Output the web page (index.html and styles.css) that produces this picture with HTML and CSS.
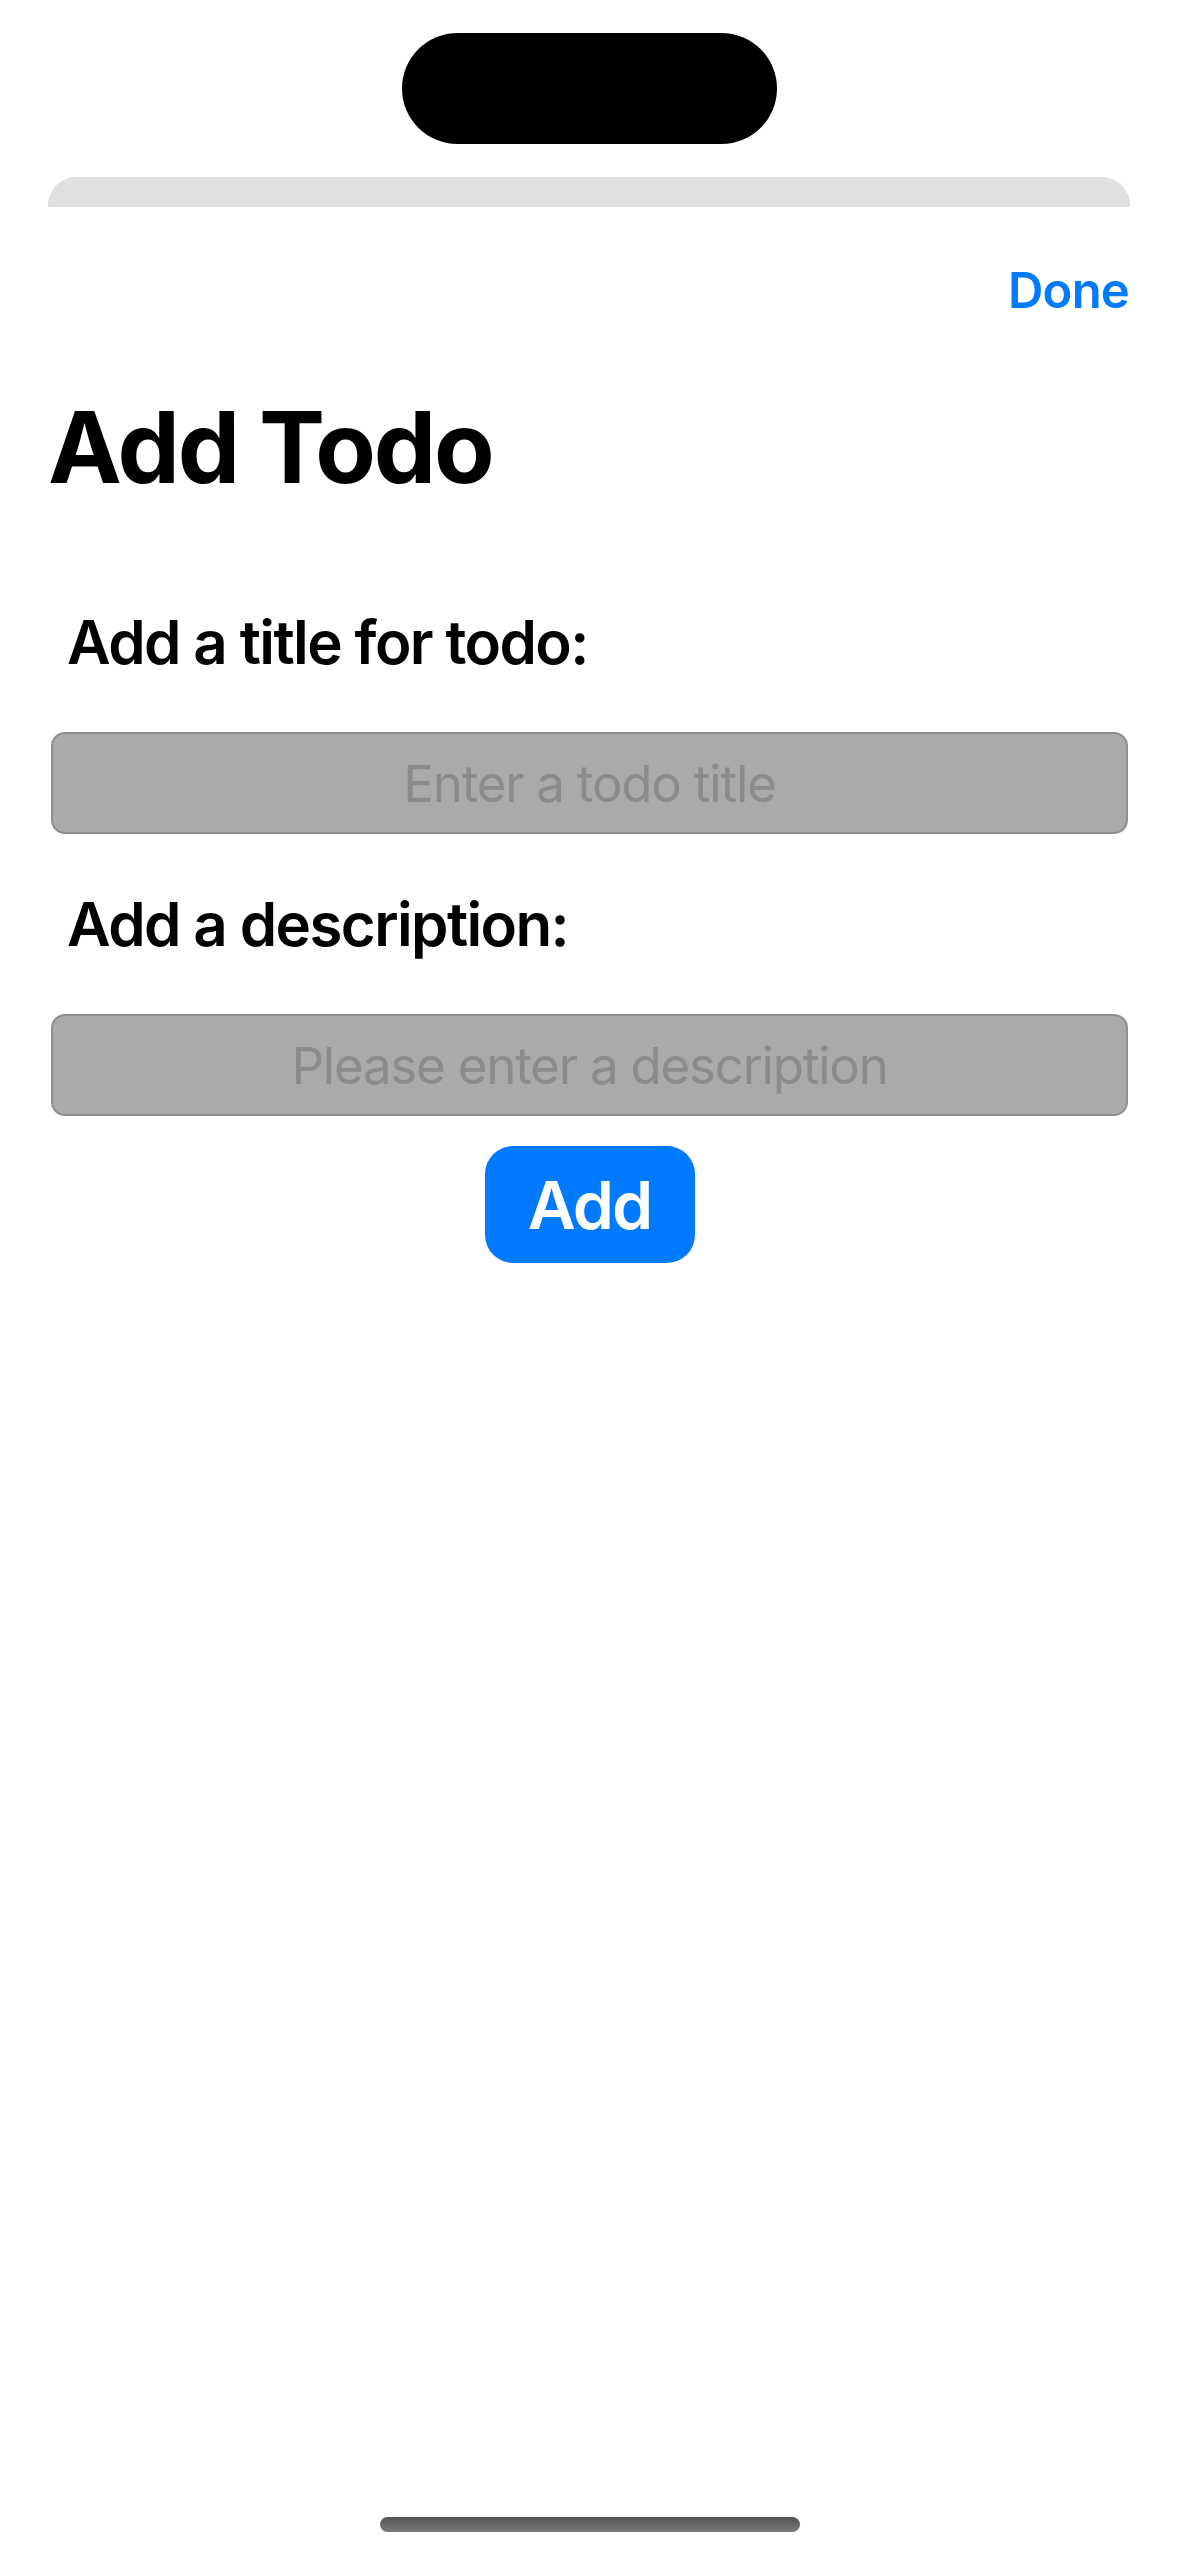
FILE: index.html
```html
<!DOCTYPE html>
<html lang="en">
<head>
<meta charset="utf-8">
<title>Add Todo</title>
<link rel="stylesheet" href="styles.css">
</head>
<body>
<div class="island"></div>
<div class="backsheet"></div>
<main class="sheet">
  <header class="navbar">
    <span class="done">Done</span>
  </header>
  <h1 class="title">Add Todo</h1>
  <form class="form">
    <label class="label" for="t">Add a title for todo:</label>
    <input class="field" id="t" type="text" placeholder="Enter a todo title">
    <label class="label" for="d">Add a description:</label>
    <input class="field" id="d" type="text" placeholder="Please enter a description">
    <div class="actions">
      <button class="add" type="button">Add</button>
    </div>
  </form>
</main>
<div class="home-indicator"></div>
</body>
</html>
```
FILE: styles.css
```css
html, body {
  margin: 0;
  padding: 0;
  background: #ffffff;
}
body {
  width: 1179px;
  height: 2556px;
  position: relative;
  overflow: hidden;
  font-family: "Inter", "Liberation Sans", sans-serif;
  color: #000;
}
.island {
  position: absolute;
  top: 33px;
  left: 402px;
  width: 375px;
  height: 111px;
  border-radius: 56px;
  background: #000;
}
.backsheet {
  margin: 177px 49px 0 48px;
  height: 30px;
  background: #e0e0e0;
  border-radius: 28px 28px 0 0;
}
.sheet {
  background: #fff;
}
.navbar {
  display: flex;
  justify-content: flex-end;
  padding: 54px 50px 0 50px;
  height: 60px;
}
.done {
  font-size: 49px;
  line-height: 60px;
  font-weight: 600;
  color: #007aff;
  letter-spacing: -0.8px;
}
.title {
  margin: 66px 0 0 48px;
  font-size: 99px;
  line-height: 120px;
  font-weight: 700;
  letter-spacing: -2.2px;
}
.form {
  display: flex;
  flex-direction: column;
  margin: 0;
}
.label {
  display: block;
  margin: 0 0 0 67px;
  font-size: 60px;
  line-height: 72px;
  font-weight: 600;
  letter-spacing: -1.6px;
}
.label:first-child {
  margin-top: 99px;
}
.field + .label {
  margin-top: 54px;
}
.field {
  box-sizing: border-box;
  margin: 54px 51px 0 51px;
  height: 102px;
  width: 1077px;
  padding: 0 20px;
  background: #aaaaaa;
  border: 2px solid #8f8f8f;
  border-radius: 14px;
  font-family: "Inter", "Liberation Sans", sans-serif;
  font-size: 51px;
  text-align: center;
  color: #000;
  outline: none;
  letter-spacing: -1.2px;
}
.field::placeholder {
  color: #8b8b8b;
  opacity: 1;
}
.actions {
  display: flex;
  justify-content: center;
  margin-top: 30px;
}
.add {
  width: 210px;
  height: 117px;
  border: none;
  border-radius: 28px;
  background: #007aff;
  color: #fff;
  font-family: "Inter", "Liberation Sans", sans-serif;
  font-size: 66px;
  font-weight: 600;
  letter-spacing: -2px;
  padding: 0;
}
.home-indicator {
  position: absolute;
  left: 380px;
  top: 2517px;
  width: 420px;
  height: 15px;
  border-radius: 8px;
  background: linear-gradient(#545454, #7a7a7a);
}
```
